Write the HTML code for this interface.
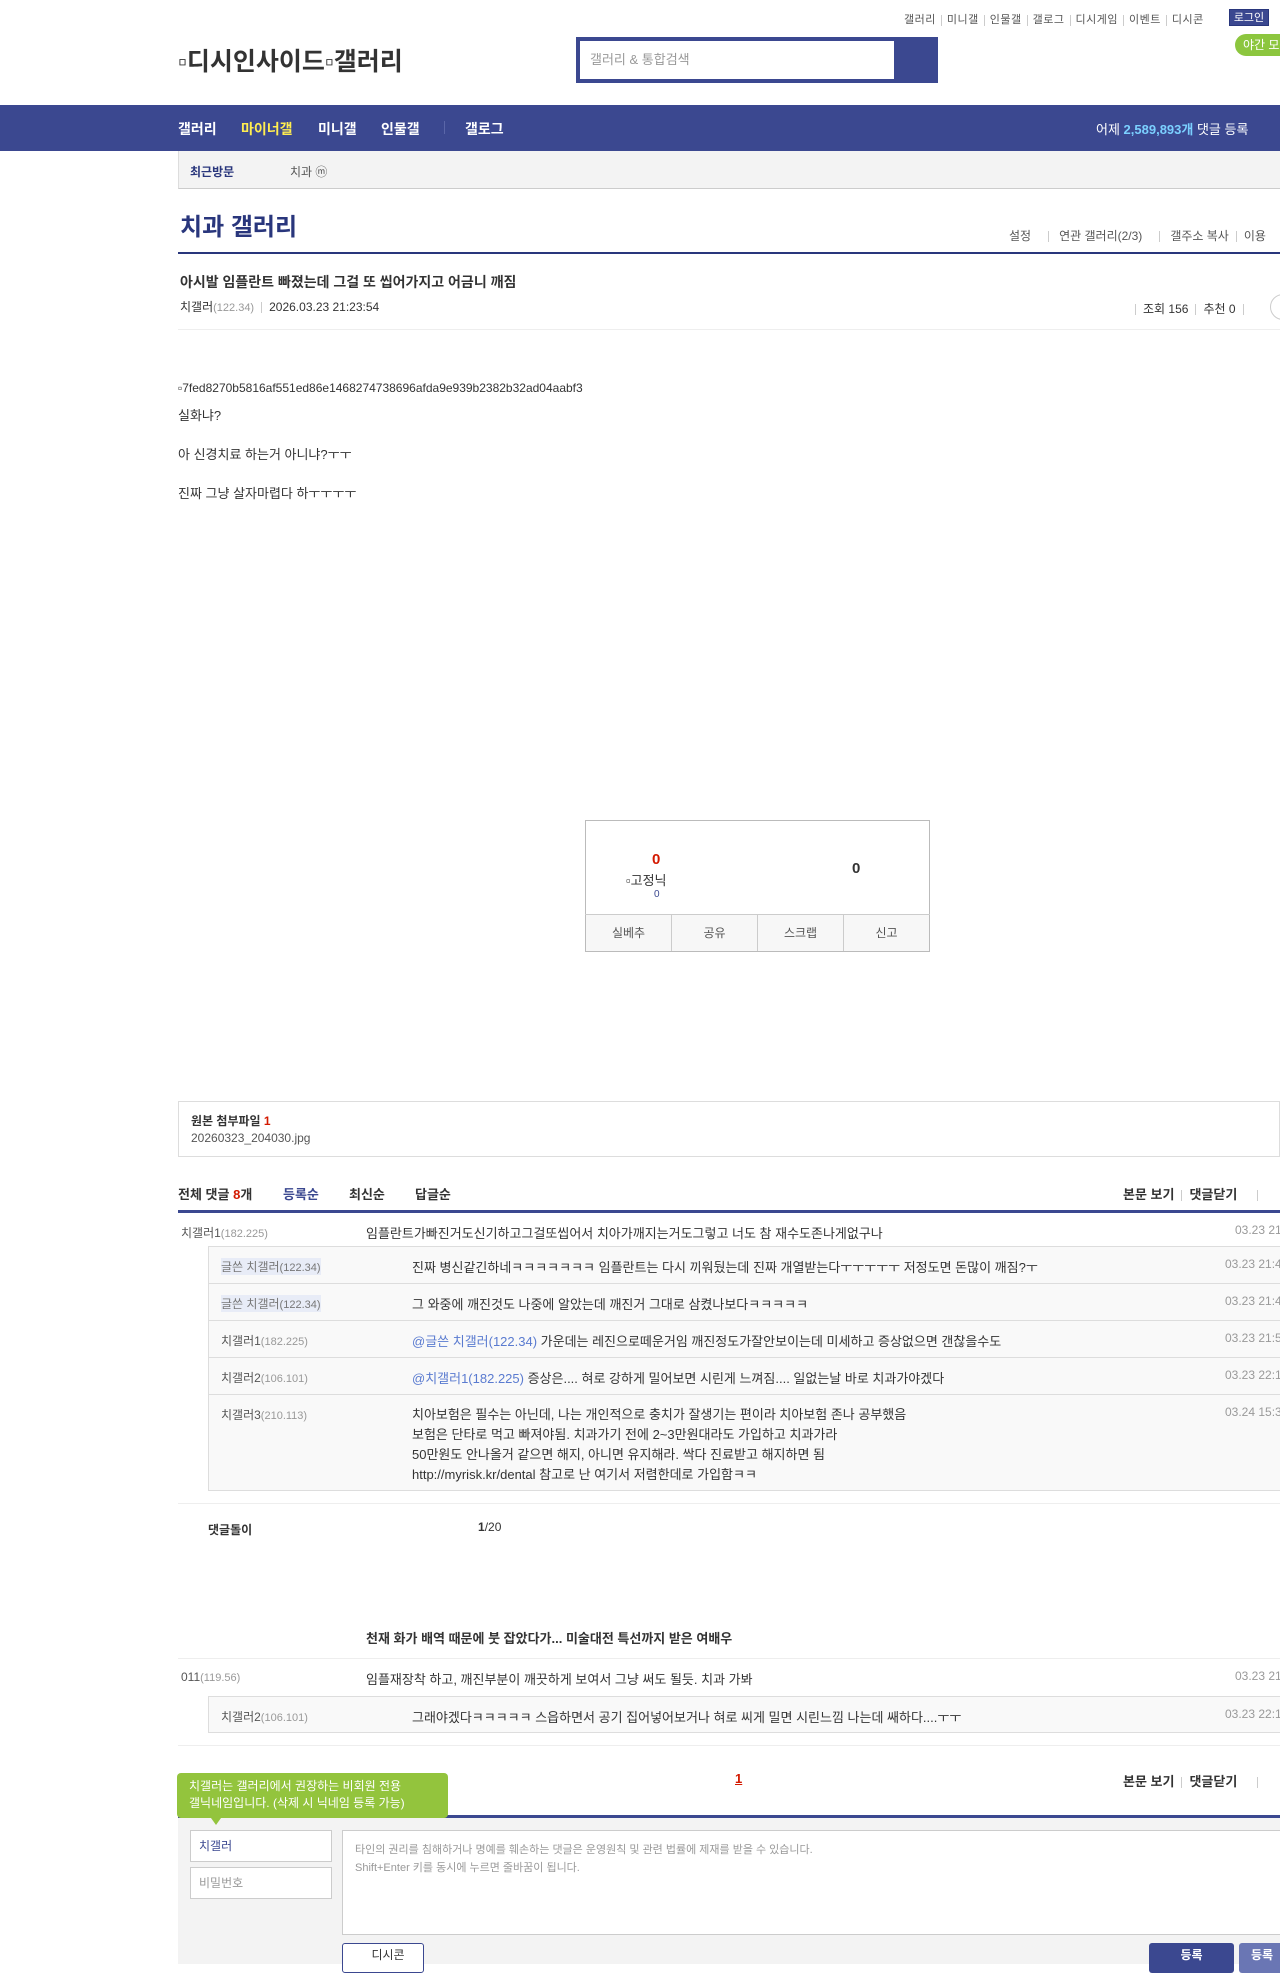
<!DOCTYPE html>
<html><head><meta charset="utf-8"><style>
*{margin:0;padding:0;box-sizing:border-box}
body{width:1280px;height:1956px;overflow:hidden;background:#fff;font-family:"Liberation Sans","Noto Sans CJK KR",sans-serif;color:#333;font-size:13px;position:relative}
.a{position:absolute;white-space:nowrap}
.w{position:absolute;left:0;width:1280px;height:0}
.g{color:#999}
.b{font-weight:bold}
.ip{font-size:11px;color:#999}
.sep{display:inline-block;width:1px;height:11px;background:#ccc;margin:0 7px;vertical-align:middle}
</style></head><body>
<!-- top links -->
<div class="a" style="top:11px;left:904px;font-size:11px;color:#555;letter-spacing:0.5px">갤러리<span class="sep" style="margin:0 5px"></span>미니갤<span class="sep" style="margin:0 5px"></span>인물갤<span class="sep" style="margin:0 5px"></span>갤로그<span class="sep" style="margin:0 5px"></span>디시게임<span class="sep" style="margin:0 5px"></span>이벤트<span class="sep" style="margin:0 5px"></span>디시콘</div>
<div class="a" style="top:9px;left:1229px;width:40px;height:17px;background:#3b4890;color:#fff;font-size:11px;text-align:center;line-height:17px;border:1px solid #29367c">로그인</div>
<div class="a" style="top:34px;left:1235px;width:60px;height:22px;background:#8cc63e;border-radius:11px;color:#fff;font-size:12px;line-height:22px;padding-left:8px">야간 모드</div>
<div class="a b" style="top:42px;left:178px;font-size:25px;color:#333">▫디시인사이드▫갤러리</div>
<div class="a" style="top:37px;left:576px;width:362px;height:46px;background:#3b4890">
<div style="position:absolute;left:4px;top:4px;width:314px;height:38px;background:#fff;color:#999;font-size:13px;line-height:38px;padding-left:10px">갤러리 &amp; 통합검색</div></div>
<!-- nav -->
<div class="a" style="top:105px;left:0;width:1280px;height:46px;background:#3b4890"></div>
<div class="a b" style="top:119px;left:178px;font-size:14px;color:#fff">갤러리</div>
<div class="a b" style="top:119px;left:241px;font-size:14px;color:#ffed50">마이너갤</div>
<div class="a b" style="top:119px;left:318px;font-size:14px;color:#fff">미니갤</div>
<div class="a b" style="top:119px;left:381px;font-size:14px;color:#fff">인물갤</div>
<div class="a" style="top:121px;left:444px;width:1px;height:13px;background:#5a66a8"></div>
<div class="a b" style="top:119px;left:465px;font-size:14px;color:#fff">갤로그</div>
<div class="a" style="top:119px;left:1096px;font-size:13px;color:#fff">어제 <b style="color:#7bd0ff">2,589,893개</b> 댓글 등록</div>
<!-- recent -->
<div class="a" style="top:151px;left:178px;width:1102px;height:38px;background:#f3f3f3;border-bottom:1px solid #ccc;border-left:1px solid #ddd"></div>
<div class="a b" style="top:163px;left:190px;font-size:12px;color:#29367c">최근방문</div>
<div class="a" style="top:163px;left:290px;font-size:12px;color:#555">치과 ⓜ</div>
<!-- title -->
<div class="a b" style="top:207px;left:180px;font-size:24px;color:#29367c">치과 갤러리</div>
<div class="a" style="top:227px;left:1009px;font-size:12px;color:#555">설정<span class="sep" style="margin:0 10px 0 17px"></span>연관 갤러리(2/3)<span class="sep" style="margin:0 10px 0 17px"></span>갤주소 복사<span class="sep" style="margin:0 7px"></span>이용</div>
<div class="a" style="top:252px;left:178px;width:1102px;height:2px;background:#29367c"></div>
<div class="a b" style="top:272px;left:180px;font-size:14px;color:#333">아시발 임플란트 빠졌는데 그걸 또 씹어가지고 어금니 깨짐</div>
<div class="a" style="top:298px;left:180px;font-size:12px">치갤러<span class="ip">(122.34)</span><span class="sep"></span>2026.03.23 21:23:54</div>
<div class="a" style="top:300px;left:1128px;font-size:12px"><span class="sep"></span>조회 156<span class="sep"></span>추천 0<span class="sep"></span></div>
<div class="a" style="top:294px;left:1270px;width:30px;height:26px;border:1px solid #ccc;border-radius:13px"></div>
<div class="a" style="top:329px;left:178px;width:1102px;height:1px;background:#eee"></div>
<!-- body -->
<div class="a" style="top:381px;left:178px;font-size:12px">▫7fed8270b5816af551ed86e1468274738696afda9e939b2382b32ad04aabf3</div>
<div class="a" style="top:405px;left:178px">실화냐?</div>
<div class="a" style="top:444px;left:178px">아 신경치료 하는거 아니냐?ㅜㅜ</div>
<div class="a" style="top:483px;left:178px">진짜 그냥 살자마렵다 하ㅜㅜㅜㅜ</div>
<div class="w" style="top:4px">
<!-- recommend box -->
<div class="a" style="top:816px;left:585px;width:345px;height:132px;border:1px solid #bbb"></div>
<div class="a" style="top:910px;left:585px;width:345px;height:1px;background:#ccc"></div>
<div class="a" style="top:911px;left:585px;width:345px;height:37px;background:#f7f7f7;border:1px solid #bbb;border-top:none;display:flex;font-size:12px;color:#555">
<div style="flex:1;border-right:1px solid #ccc;text-align:center;line-height:36px">실베추</div>
<div style="flex:1;border-right:1px solid #ccc;text-align:center;line-height:36px">공유</div>
<div style="flex:1;border-right:1px solid #ccc;text-align:center;line-height:36px">스크랩</div>
<div style="flex:1;text-align:center;line-height:36px">신고</div></div>
<div class="a b" style="top:847px;left:652px;font-size:15px;color:#d31900">0</div>
<div class="a" style="top:866px;left:626px;font-size:13px">▫고정닉</div>
<div class="a" style="top:885px;left:654px;font-size:10px;color:#3b4890">0</div>
<div class="a b" style="top:856px;left:852px;font-size:15px;color:#333">0</div>
<!-- attachment -->
<div class="a" style="top:1097px;left:178px;width:1102px;height:56px;border:1px solid #ddd"></div>
<div class="a b" style="top:1108px;left:191px;font-size:12px">원본 첨부파일 <span style="color:#d31900">1</span></div>
<div class="a" style="top:1127px;left:191px;font-size:12px;color:#555">20260323_204030.jpg</div>
</div>
<div class="w" style="top:5px">
<!-- comment header -->
<div class="a b" style="top:1179px;left:178px;font-size:13px">전체 댓글 <span style="color:#d31900">8</span>개</div>
<div class="a b" style="top:1179px;left:283px;font-size:13px;color:#3b4890">등록순</div>
<div class="a b" style="top:1179px;left:349px;font-size:13px">최신순</div>
<div class="a b" style="top:1179px;left:415px;font-size:13px">답글순</div>
<div class="a b" style="top:1179px;left:1123px;font-size:13px">본문 보기<span class="sep"></span>댓글닫기<span class="sep" style="margin-left:20px"></span></div>
<div class="a" style="top:1205px;left:178px;width:1102px;height:3px;background:#3b4890"></div>
<div class="a" style="top:1219px;left:181px;font-size:12px;color:#555">치갤러1<span class="ip">(182.225)</span></div>
<div class="a" style="top:1218px;left:366px">임플란트가빠진거도신기하고그걸또씹어서 치아가깨지는거도그렇고 너도 참 재수도존나게없구나</div>
<div class="a" style="top:1218px;left:1235px;font-size:12px;color:#999">03.23 21</div>
<div class="a" style="top:1241px;left:208px;width:1072px;height:245px;background:#f9f9f9;border:1px solid #ddd;border-right:none"></div>
<div class="a" style="top:1278px;left:209px;width:1071px;height:1px;background:#ddd"></div>
<div class="a" style="top:1315px;left:209px;width:1071px;height:1px;background:#ddd"></div>
<div class="a" style="top:1352px;left:209px;width:1071px;height:1px;background:#ddd"></div>
<div class="a" style="top:1389px;left:209px;width:1071px;height:1px;background:#ddd"></div>
<div class="a" style="top:1253px;left:221px;font-size:12px;color:#777;background:#e8ecf7">글쓴 치갤러<span style="font-size:11px">(122.34)</span></div>
<div class="a" style="top:1252px;left:412px">진짜 병신같긴하네ㅋㅋㅋㅋㅋㅋㅋ 임플란트는 다시 끼워뒀는데 진짜 개열받는다ㅜㅜㅜㅜㅜ 저정도면 돈많이 깨짐?ㅜ</div>
<div class="a" style="top:1252px;left:1225px;font-size:12px;color:#999">03.23 21:4</div>
<div class="a" style="top:1290px;left:221px;font-size:12px;color:#777;background:#e8ecf7">글쓴 치갤러<span style="font-size:11px">(122.34)</span></div>
<div class="a" style="top:1289px;left:412px">그 와중에 깨진것도 나중에 알았는데 깨진거 그대로 삼켰나보다ㅋㅋㅋㅋㅋ</div>
<div class="a" style="top:1289px;left:1225px;font-size:12px;color:#999">03.23 21:4</div>
<div class="a" style="top:1327px;left:221px;font-size:12px;color:#555">치갤러1<span class="ip">(182.225)</span></div>
<div class="a" style="top:1326px;left:412px"><span style="color:#5a7bd0">@글쓴 치갤러(122.34)</span> 가운데는 레진으로떼운거임 깨진정도가잘안보이는데 미세하고 증상없으면 갠찮을수도</div>
<div class="a" style="top:1326px;left:1225px;font-size:12px;color:#999">03.23 21:5</div>
<div class="a" style="top:1364px;left:221px;font-size:12px;color:#555">치갤러2<span class="ip">(106.101)</span></div>
<div class="a" style="top:1363px;left:412px"><span style="color:#5a7bd0">@치갤러1(182.225)</span> 증상은.... 혀로 강하게 밀어보면 시린게 느껴짐.... 일없는날 바로 치과가야겠다</div>
<div class="a" style="top:1363px;left:1225px;font-size:12px;color:#999">03.23 22:1</div>
<div class="a" style="top:1401px;left:221px;font-size:12px;color:#555">치갤러3<span class="ip">(210.113)</span></div>
<div class="a" style="top:1400px;left:412px;line-height:20px;white-space:normal;width:800px">치아보험은 필수는 아닌데, 나는 개인적으로 충치가 잘생기는 편이라 치아보험 존나 공부했음<br>보험은 단타로 먹고 빠져야됨. 치과가기 전에 2~3만원대라도 가입하고 치과가라<br>50만원도 안나올거 같으면 해지, 아니면 유지해라. 싹다 진료받고 해지하면 됨<br>http://myrisk.kr/dental 참고로 난 여기서 저렴한데로 가입함ㅋㅋ</div>
<div class="a" style="top:1400px;left:1225px;font-size:12px;color:#999">03.24 15:3</div>
</div>
<div class="w" style="top:8px">
<div class="a" style="top:1495px;left:178px;width:1102px;height:1px;background:#eee"></div>
<div class="a b" style="top:1513px;left:208px;font-size:12px">댓글돌이</div>
<div class="a" style="top:1512px;left:478px;font-size:12px"><b>1</b>/20</div>
<div class="a b" style="top:1620px;left:366px">천재 화가 배역 때문에 붓 잡았다가... 미술대전 특선까지 받은 여배우</div>
<div class="a" style="top:1650px;left:178px;width:1102px;height:1px;background:#eee"></div>
<div class="a" style="top:1662px;left:181px;font-size:12px;color:#555">011<span class="ip">(119.56)</span></div>
<div class="a" style="top:1661px;left:366px">임플재장착 하고, 깨진부분이 깨끗하게 보여서 그냥 써도 될듯. 치과 가봐</div>
<div class="a" style="top:1661px;left:1235px;font-size:12px;color:#999">03.23 21</div>
<div class="a" style="top:1688px;left:208px;width:1072px;height:37px;background:#f9f9f9;border:1px solid #ddd;border-right:none"></div>
<div class="a" style="top:1700px;left:221px;font-size:12px;color:#555">치갤러2<span class="ip">(106.101)</span></div>
<div class="a" style="top:1699px;left:412px">그래야겠다ㅋㅋㅋㅋㅋ 스읍하면서 공기 집어넣어보거나 혀로 씨게 밀면 시린느낌 나는데 쌔하다....ㅜㅜ</div>
<div class="a" style="top:1699px;left:1225px;font-size:12px;color:#999">03.23 22:1</div>
<div class="a" style="top:1737px;left:178px;width:1102px;height:1px;background:#eee"></div>
<div class="a b" style="top:1763px;left:735px;font-size:13px;color:#d31900;text-decoration:underline">1</div>
<div class="a b" style="top:1763px;left:1123px;font-size:13px">본문 보기<span class="sep"></span>댓글닫기<span class="sep" style="margin-left:20px"></span></div>
<!-- write -->
<div class="a" style="top:1807px;left:178px;width:1102px;height:3px;background:#3b4890"></div>
<div class="a" style="top:1810px;left:178px;width:1102px;height:146px;background:#f3f3f3"></div>
<div class="a" style="top:1765px;left:177px;width:271px;height:45px;background:#93c43d;border-radius:4px;color:#fff;font-size:12px;line-height:17px;padding:5px 12px;white-space:normal">치갤러는 갤러리에서 권장하는 비회원 전용<br>갤닉네임입니다. (삭제 시 닉네임 등록 가능)</div>
<div class="a" style="top:1810px;left:211px;width:0;height:0;border-left:5px solid transparent;border-right:5px solid transparent;border-top:7px solid #93c43d"></div>
<div class="a" style="top:1822px;left:190px;width:142px;height:32px;background:#fff;border:1px solid #ccc;font-size:12px;color:#3b4890;line-height:30px;padding-left:8px">치갤러</div>
<div class="a" style="top:1859px;left:190px;width:142px;height:32px;background:#fff;border:1px solid #ccc;font-size:12px;color:#999;line-height:30px;padding-left:8px">비밀번호</div>
<div class="a" style="top:1822px;left:342px;width:938px;height:105px;background:#fff;border:1px solid #ccc;border-right:none;font-size:11px;color:#999;line-height:18px;padding:10px 12px">타인의 권리를 침해하거나 명예를 훼손하는 댓글은 운영원칙 및 관련 법률에 제재를 받을 수 있습니다.<br>Shift+Enter 키를 동시에 누르면 줄바꿈이 됩니다.</div>
<div class="a" style="top:1935px;left:342px;width:82px;height:30px;background:#fff;border:1px solid #3b4890;border-radius:3px;font-size:12px;color:#333;text-align:center;line-height:22px;padding-left:10px">디시콘</div>
<div class="a b" style="top:1935px;left:1149px;width:85px;height:30px;background:#3b4890;border-radius:3px;color:#fff;font-size:12px;text-align:center;line-height:24px">등록</div>
<div class="a b" style="top:1935px;left:1239px;width:60px;height:30px;background:#6a76b4;border-radius:3px;color:#fff;font-size:12px;padding-left:12px;line-height:24px">등록</div>
</div>
</body></html>
